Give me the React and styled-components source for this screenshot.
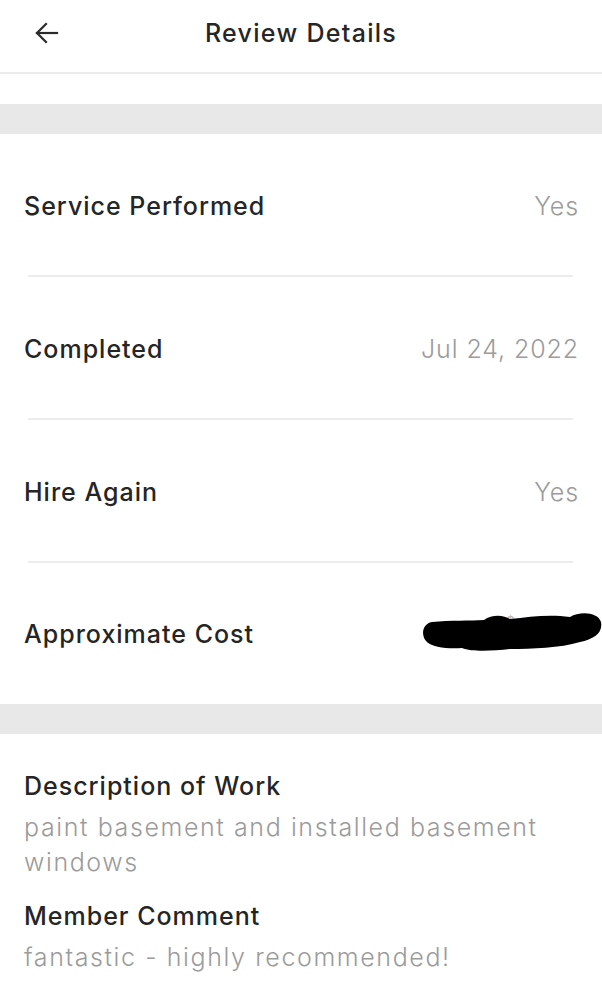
import React from "react";
import styled, { createGlobalStyle } from "styled-components";

const Global = createGlobalStyle`
  html, body { margin: 0; padding: 0; background: #fff; }
  body { font-family: Inter, Roboto, sans-serif; }
`;

const Page = styled.div`
  width: 602px;
  min-height: 990px;
  background: #fff;
  display: flex;
  flex-direction: column;
`;

const Header = styled.header`
  height: 72px;
  position: relative;
  display: flex;
  align-items: center;
  justify-content: center;
  border-bottom: 2px solid #ebebeb;
`;

const BackButton = styled.button`
  position: absolute;
  left: 28px;
  top: 16px;
  width: 38px;
  height: 34px;
  border: none;
  background: none;
  padding: 0;
  display: flex;
  align-items: center;
  justify-content: center;
  color: #2a2a2a;
`;

const Title = styled.h1`
  margin: 0 0 6px;
  font-size: 25px;
  font-weight: 500;
  color: #262626;
  letter-spacing: 1.3px;
`;

const Spacer = styled.div`
  height: 30px;
`;

const Band = styled.div`
  height: 30px;
  background: #e8e8e8;
`;

const Row = styled.div`
  height: ${(p) => (p.$divider ? 143 : 141)}px;
  display: flex;
  align-items: center;
  justify-content: space-between;
  padding: 0 24px;
  position: relative;
  ${(p) =>
    p.$divider &&
    `&::after {
      content: "";
      position: absolute;
      left: 28px;
      right: 29px;
      bottom: 0;
      height: 2px;
      background: #ececec;
    }`}
`;

const Label = styled.span`
  font-size: 25px;
  font-weight: 500;
  color: #252525;
  letter-spacing: 1px;
`;

const Value = styled.span`
  font-size: 25px;
  font-weight: 300;
  color: #9b9b9b;
  letter-spacing: 0.9px;
  margin-right: -1px;
`;

const Blob = styled.svg`
  display: block;
  margin-right: -24px;
`;

const Details = styled.section`
  padding: 34px 24px 0;
  display: flex;
  flex-direction: column;
`;

const DetailTitle = styled.h2`
  margin: 0;
  font-size: 25px;
  font-weight: 500;
  color: #252525;
  line-height: 36px;
  letter-spacing: 1px;
`;

const DetailText = styled.p`
  margin: 6px 0 18px;
  font-size: 25px;
  font-weight: 300;
  color: #9b9b9b;
  line-height: 35px;
  letter-spacing: 1.6px;
  max-width: 550px;
`;

const rows = [
  { label: "Service Performed", value: "Yes" },
  { label: "Completed", value: "Jul 24, 2022" },
  { label: "Hire Again", value: "Yes" },
];

export default function App() {
  return (
    <Page>
      <Global />
      <Header>
        <BackButton aria-label="Back">
          <svg width="26" height="24" viewBox="0 0 26 24" fill="none" stroke="currentColor" strokeWidth="2.2" strokeLinecap="square">
            <path d="M3 12 H23" />
            <path d="M12 3 L3 12 L12 21" />
          </svg>
        </BackButton>
        <Title>Review Details</Title>
      </Header>
      <Spacer />
      <Band />
      {rows.map((r) => (
        <Row key={r.label} $divider>
          <Label>{r.label}</Label>
          <Value>{r.value}</Value>
        </Row>
      ))}
      <Row>
        <Label>Approximate Cost</Label>
        <Blob width="182" height="46" viewBox="0 0 182 46">
          <text x="86" y="16" fontSize="14" fill="#bbb" fontFamily="Inter, sans-serif">$</text>
          <path
            d="M12 11 C30 9 50 10 64 9 C72 3 84 4 90 8 C110 6 128 3 150 6 C160 0 178 1 181 11 C183 22 174 28 160 31 C140 37 112 38 90 38 C72 40 52 41 42 37 C30 38 12 37 6 30 C1 24 2 13 12 11 Z"
            fill="#000"
          />
        </Blob>
      </Row>
      <Band />
      <Details>
        <DetailTitle>Description of Work</DetailTitle>
        <DetailText>paint basement and installed basement windows</DetailText>
        <DetailTitle>Member Comment</DetailTitle>
        <DetailText>fantastic - highly recommended!</DetailText>
      </Details>
    </Page>
  );
}
